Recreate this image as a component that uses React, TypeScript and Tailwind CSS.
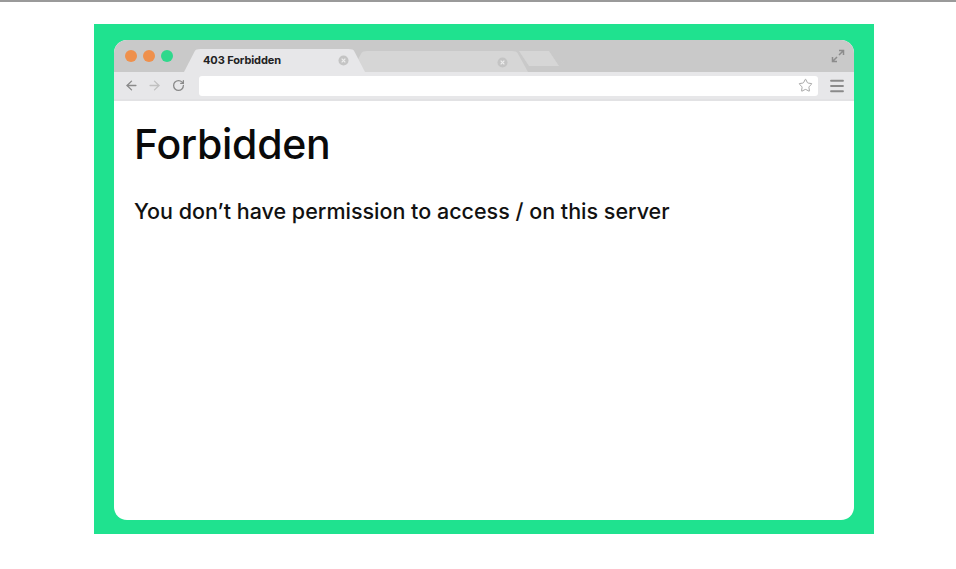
import { ArrowLeft, ArrowRight, RotateCw, Star, Menu } from 'lucide-react'

function TabShape({ fill, d }: { fill: string; d?: string }) {
  return (
    <svg className="absolute inset-0 h-full w-full" viewBox="0 0 100 24" preserveAspectRatio="none">
      <path d={d ?? 'M0 24 L6 2 Q6.6 0 9 0 L91 0 Q93.4 0 94 2 L100 24 Z'} fill={fill} />
    </svg>
  )
}

function CloseDot() {
  return (
    <svg width="11" height="11" viewBox="0 0 12 12">
      <circle cx="6" cy="6" r="5.5" fill="#c4c4c4" />
      <path d="M4 4 L8 8 M8 4 L4 8" stroke="#ececec" strokeWidth="1.4" />
    </svg>
  )
}

function ExpandIcon() {
  return (
    <svg width="14" height="14" viewBox="0 0 14 14" fill="none" stroke="#8c8c8c" strokeWidth="1.5">
      <path d="M8 1.5 H12.5 V6 M12.5 1.5 L8 6" />
      <path d="M6 12.5 H1.5 V8 M1.5 12.5 L6 8" />
    </svg>
  )
}

export default function App() {
  return (
    <div
      className="h-[569px] w-[956px] bg-white border-t-2 border-[#9a9a9a]"
      style={{ fontFamily: 'Inter, "Noto Sans", sans-serif' }}
    >
      <div className="ml-[94px] mt-[22px] h-[510px] w-[780px] bg-[#1fe28f] px-5 pt-4 pb-[14px]">
        <div className="flex h-full flex-col overflow-hidden rounded-[13px] bg-white">
          {/* tab strip */}
          <div className="relative flex h-[32px] shrink-0 items-end bg-[#c9c9c9]">
            <div className="flex h-full items-center gap-[6px] self-center pl-[11px] pr-[6px]">
              <span className="h-[12px] w-[12px] rounded-full bg-[#ef904c]" />
              <span className="h-[12px] w-[12px] rounded-full bg-[#ef904c]" />
              <span className="h-[12px] w-[12px] rounded-full bg-[#2fd88c]" />
            </div>
            <div className="relative z-20 ml-[5px] flex h-[23px] w-[181px] items-center pl-[19px] pr-[16px]">
              <TabShape fill="#e7e7e9" />
              <span className="relative text-[11px] font-bold tracking-[-0.1px] text-[#222]">403 Forbidden</span>
              <span className="relative ml-auto -mt-[1px]">
                <CloseDot />
              </span>
            </div>
            <div className="relative z-10 -ml-[14px] flex h-[21px] w-[177px] items-center pr-[20px]">
              <TabShape fill="#d6d6d6" />
              <span className="relative ml-auto mt-[1px]">
                <CloseDot />
              </span>
            </div>
            <div className="relative -ml-[9px] mb-[6px] h-[15px] w-[40px]">
              <TabShape fill="#d6d6d6" d="M0 0 L75 0 L100 24 L25 24 Z" />
            </div>
            <div className="ml-auto mr-[9px] self-center">
              <ExpandIcon />
            </div>
          </div>
          {/* toolbar */}
          <div className="flex h-[29px] shrink-0 items-center gap-[8px] border-b-[2px] border-[#e2e2e4] bg-[#e7e7e9] pl-[10px] pr-[8px]">
            <ArrowLeft size={15} strokeWidth={2.2} color="#8a8a8a" />
            <ArrowRight size={15} strokeWidth={2.2} color="#c0c0c0" />
            <RotateCw size={13} strokeWidth={2.4} color="#8a8a8a" className="ml-[2px]" />
            <div className="ml-[6px] flex h-[20px] flex-1 items-center justify-end rounded-[3px] bg-white pr-[5px]">
              <Star size={15} strokeWidth={1.4} color="#9a9a9a" />
            </div>
            <Menu size={18} strokeWidth={2.4} color="#8a8a8a" className="ml-[2px]" />
          </div>
          {/* page */}
          <div className="flex-1 px-5 pt-[23px]">
            <h1 className="text-[41px] font-medium leading-none tracking-[-0.3px] text-[#0a0a0a]">Forbidden</h1>
            <p className="mt-[36px] text-[21.5px] font-medium leading-none tracking-normal text-[#111]">
              You don’t have permission to access / on this server
            </p>
          </div>
        </div>
      </div>
    </div>
  )
}
